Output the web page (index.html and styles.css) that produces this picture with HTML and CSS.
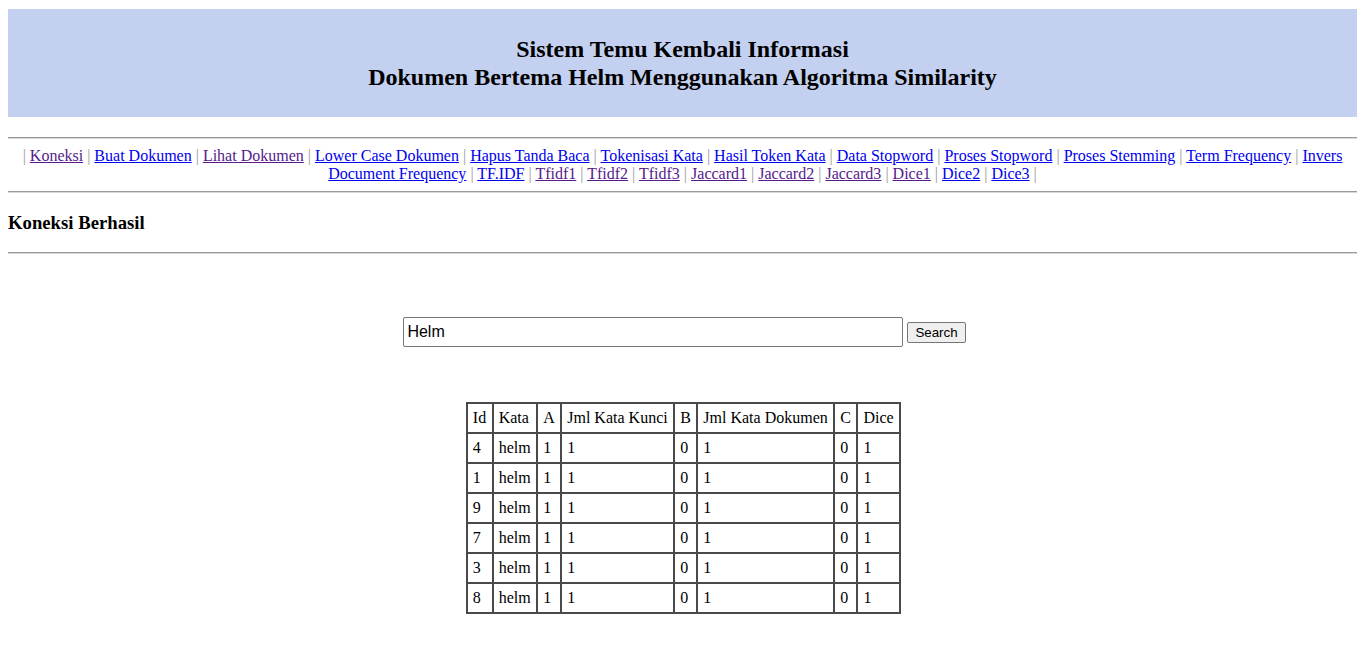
FILE: index.html
```html
<!DOCTYPE html>
<html>
<head>
<meta charset="utf-8">
<title>Sistem Temu Kembali Informasi</title>
<link rel="stylesheet" href="styles.css">
</head>
<body class="page">
<div class="banner">
  <h2 class="title">Sistem Temu Kembali Informasi<br>Dokumen Bertema Helm Menggunakan Algoritma Similarity</h2>
</div>
<hr class="rule first-rule">
<div class="nav">| <a class="lnk visited" href="#">Koneksi</a> | <a class="lnk" href="#">Buat Dokumen</a> | <a class="lnk visited" href="#">Lihat Dokumen</a> | <a class="lnk" href="#">Lower Case Dokumen</a> | <a class="lnk" href="#">Hapus Tanda Baca</a> | <a class="lnk" href="#">Tokenisasi Kata</a> | <a class="lnk" href="#">Hasil Token Kata</a> | <a class="lnk" href="#">Data Stopword</a> | <a class="lnk" href="#">Proses Stopword</a> | <a class="lnk" href="#">Proses Stemming</a> | <a class="lnk" href="#">Term Frequency</a> | <a class="lnk" href="#">Invers Document Frequency</a> | <a class="lnk" href="#">TF.IDF</a> | <a class="lnk visited" href="#">Tfidf1</a> | <a class="lnk visited" href="#">Tfidf2</a> | <a class="lnk visited" href="#">Tfidf3</a> | <a class="lnk visited" href="#">Jaccard1</a> | <a class="lnk visited" href="#">Jaccard2</a> | <a class="lnk visited" href="#">Jaccard3</a> | <a class="lnk visited" href="#">Dice1</a> | <a class="lnk" href="#">Dice2</a> | <a class="lnk" href="#">Dice3</a> |</div>
<hr class="rule">
<h3 class="status">Koneksi Berhasil</h3>
<hr class="rule">
<form class="search" action="#">
  <input class="search-input" type="text" value="Helm"> <button class="search-btn" type="button">Search</button>
</form>
<div class="table-wrap">
<table class="result">
  <tr><td>Id</td><td>Kata</td><td>A</td><td>Jml Kata Kunci</td><td>B</td><td>Jml Kata Dokumen</td><td>C</td><td>Dice</td></tr>
  <tr><td>4</td><td>helm</td><td>1</td><td>1</td><td>0</td><td>1</td><td>0</td><td>1</td></tr>
  <tr><td>1</td><td>helm</td><td>1</td><td>1</td><td>0</td><td>1</td><td>0</td><td>1</td></tr>
  <tr><td>9</td><td>helm</td><td>1</td><td>1</td><td>0</td><td>1</td><td>0</td><td>1</td></tr>
  <tr><td>7</td><td>helm</td><td>1</td><td>1</td><td>0</td><td>1</td><td>0</td><td>1</td></tr>
  <tr><td>3</td><td>helm</td><td>1</td><td>1</td><td>0</td><td>1</td><td>0</td><td>1</td></tr>
  <tr><td>8</td><td>helm</td><td>1</td><td>1</td><td>0</td><td>1</td><td>0</td><td>1</td></tr>
</table>
</div>
</body>
</html>
```
FILE: styles.css
```css
html { background: #ffffff; }
.page {
  margin: 8px;
  padding-top: 1px;
  font-family: "Liberation Serif", "Times New Roman", serif;
  font-size: 16px;
  color: #000;
  background: #fff;
}
.banner {
  background: #c4d0f0;
  height: 108px;
  display: flex;
  align-items: center;
  justify-content: center;
}
.title {
  margin: 0;
  font-size: 24px;
  line-height: 28px;
  font-weight: bold;
  text-align: center;
}
.rule {
  margin: 8px 0;
  border: none;
  border-top: 1px solid #9a9a9a;
  border-bottom: 1px solid #d6d6d6;
  height: 0;
}
.first-rule { margin-top: 20px; }
.nav {
  text-align: center;
  color: #999999;
  line-height: 18px;
}
.lnk { color: #0000ee; text-decoration: underline; }
.lnk.visited { color: #551a8b; }
.status {
  font-size: 18.72px;
  line-height: 22px;
  margin: 19px 0 18px;
  font-weight: bold;
}
.search {
  margin: 63px 0 0;
  padding-left: 4px;
  text-align: center;
}
.search-input {
  width: 500px;
  height: 30px;
  box-sizing: border-box;
  padding: 1px 3px;
  border: 1px solid #767676;
  border-radius: 2px;
  font-family: "Liberation Sans", Arial, sans-serif;
  font-size: 16px;
  vertical-align: middle;
  color: #000;
}
.search-btn {
  font-family: "Liberation Sans", Arial, sans-serif;
  font-size: 13.33px;
  height: 21px;
  padding: 1px 7px;
  border: 1px solid #767676;
  border-radius: 2px;
  background: #efefef;
  color: #000;
  vertical-align: middle;
}
.table-wrap {
  margin-top: 55px;
  padding-left: 2px;
  display: flex;
  justify-content: center;
}
.result {
  border-collapse: collapse;
  border: 2px solid #4a4a4a;
}
.result td {
  border: 2px solid #4a4a4a;
  padding: 5px 5.5px 5px 5px;
  line-height: 18px;
  text-align: left;
  vertical-align: middle;
}
```
